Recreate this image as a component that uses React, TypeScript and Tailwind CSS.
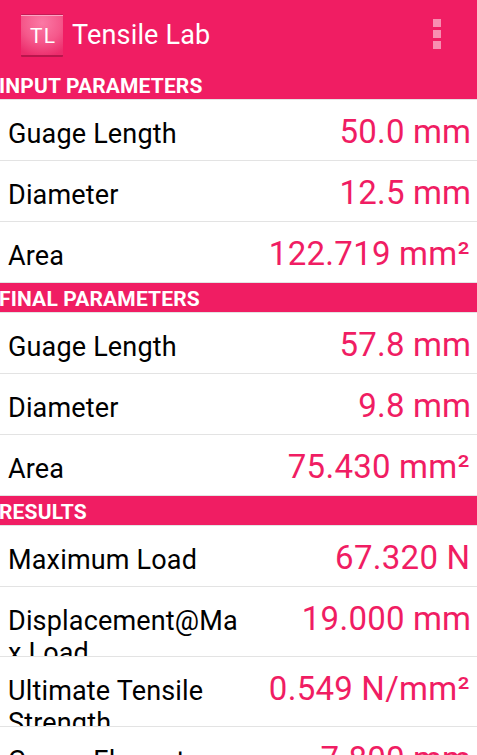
type Item = {
	label: string;
	value: string;
	unit: string;
	tall?: boolean;
};

const sections: { title: string; items: Item[] }[] = [
	{
		title: "INPUT PARAMETERS",
		items: [
			{ label: "Guage Length", value: "50.0", unit: "mm" },
			{ label: "Diameter", value: "12.5", unit: "mm" },
			{ label: "Area", value: "122.719", unit: "mm²" },
		],
	},
	{
		title: "FINAL PARAMETERS",
		items: [
			{ label: "Guage Length", value: "57.8", unit: "mm" },
			{ label: "Diameter", value: "9.8", unit: "mm" },
			{ label: "Area", value: "75.430", unit: "mm²" },
		],
	},
	{
		title: "RESULTS",
		items: [
			{ label: "Maximum Load", value: "67.320", unit: "N" },
			{ label: "Displacement@Max Load", value: "19.000", unit: "mm", tall: true },
			{ label: "Ultimate Tensile Strength", value: "0.549", unit: "N/mm²", tall: true },
			{ label: "Guage Elongate", value: "7.800", unit: "mm", tall: true },
		],
	},
];

const unitSpacing: Record<string, string> = {
	mm: "-mr-px",
	"mm²": "tracking-[0.3px]",
	"N/mm²": "tracking-[0.3px]",
};

const Row = ({ label, value, unit, tall }: Item) => (
	<li
		className={`${tall ? "h-[70px]" : "h-[61px]"} flex items-start justify-between overflow-hidden border-b border-[#e3e3e3] pl-2 pr-[7px]`}
	>
		<span className="w-[234px] shrink-0 break-words pt-[18px] text-[27px] leading-8 tracking-[0.17px] text-black">
			{label}
		</span>
		<span className="whitespace-nowrap pt-3 text-[33px] leading-10 text-[#f01d63]">
			<span className="tracking-[0.3px]">{value}</span> <span className={unitSpacing[unit]}>{unit}</span>
		</span>
	</li>
);

const App = () => {
	return (
		<main className="flex h-screen flex-col overflow-hidden bg-white font-['Roboto',sans-serif]">
			<header className="flex h-[70px] shrink-0 items-center bg-[#f01d63] pl-[21px] pr-9 text-white">
				{/* App icon */}
				<div className="flex h-[43px] w-[42px] flex-col overflow-hidden rounded-[1px] border-b-2 border-t border-b-[#b8164c] border-t-[#c51a55] bg-[radial-gradient(circle_at_50%_20%,#fb79a5,#f5588b_50%,#ec2c6c_90%)]">
					<span className="h-px w-full bg-[#fba5c2]" />
					<span className="pl-[9px] pt-[5px] text-[21px] leading-[30px] tracking-[1.2px]">TL</span>
				</div>
				<h1 className="ml-[9px] flex-1 text-[27px] tracking-[0.17px]">Tensile Lab</h1>
				<button type="button" aria-label="Menu" className="-mt-0.5 flex flex-col gap-[3px]">
					<span className="size-2 bg-white/50" />
					<span className="size-2 bg-white/50" />
					<span className="size-2 bg-white/50" />
				</button>
			</header>

			{sections.map(({ title, items }) => (
				<section key={title} className="shrink-0">
					<h2 className="-indent-px h-[30px] border-b border-[#e3e3e3] bg-[#f01d63] text-[21px] font-bold leading-[33px] tracking-[0.15px] text-white">
						{title}
					</h2>
					<ul>
						{items.map((item) => (
							<Row key={item.label} {...item} />
						))}
					</ul>
				</section>
			))}
		</main>
	);
};

export default App;
